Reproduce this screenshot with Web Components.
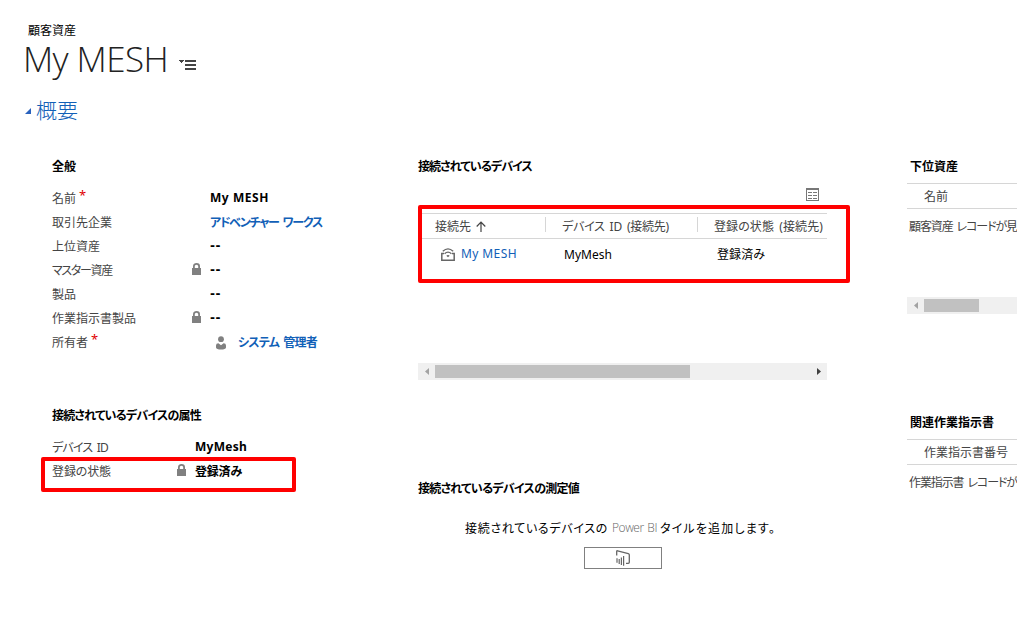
<!DOCTYPE html>
<html lang="ja">
<head>
<meta charset="utf-8">
<title>My MESH</title>
<style>
  html, body {
    margin: 0;
    height: 100%;
    overflow: hidden;
    background: #fff;
  }
  body {
    --link: #1160b7;
    --line: #d6d6d6;
    --mark: #f00;
    font: 12px/24px "Noto Sans", "Noto Sans CJK JP", sans-serif;
    color: #000;
  }
</style>
</head>
<body>
<asset-page></asset-page>

<script>
const define = (tag, html, setup) => {
  const template = document.createElement('template');
  template.innerHTML = html;
  customElements.define(tag, class extends HTMLElement {
    constructor() {
      super();
      this.attachShadow({mode: 'open'});
      this.shadowRoot.append(template.content.cloneNode(true));
    }

    connectedCallback() {
      if (setup) setup(this, this.shadowRoot);
    }
  });
};

// one line of text, tracked so that it fills the width in "w"
define('fit-text', `
<style>
  :host { display: block; white-space: nowrap; font-feature-settings: "palt"; flex: none; }
  span { display: inline-block; white-space: pre; }
  .kanji { padding-top: 1px; word-spacing: 2px; }
</style>
<span><slot></slot></span>
`, (host, root) => {
  const width = Number(host.getAttribute('w'));
  const span = root.querySelector('span');
  const count = host.textContent.length;
  if (!width || !count) return;
  // Japanese glyphs sit a pixel higher than Latin ones in this stack
  if (/[^\x00-\x7f]/.test(host.textContent)) span.className = 'kanji';
  span.style.letterSpacing = '0';
  const natural = span.getBoundingClientRect().width;
  span.style.letterSpacing = `${(width - natural) / count}px`;
  host.style.width = `${width}px`;
});

define('lock-icon', `
<style>
  :host { display: block; width: 9px; height: 12px; }
  svg { display: block; }
</style>
<svg width="9" height="12" viewBox="0 0 9 12">
  <path d="M1.900 6V3.300C1.900 1.700 3 .9 4.500 .9s2.600 .8 2.600 2.400V6" fill="none" stroke="#808080" stroke-width="1.800"/>
  <rect y="5" width="9" height="7" fill="#808080"/>
</svg>
`);

define('person-icon', `
<style>
  :host { display: block; width: 10px; height: 14px; }
  svg { display: block; }
</style>
<svg width="10" height="14" viewBox="0 0 10 14" fill="#808080">
  <circle cx="5" cy="3.2" r="2.9"/>
  <path d="M0 9.5Q0 7.3 2.4 7.2L5 9.2l2.6-2Q10 7.3 10 9.5v2Q9.5 13.5 5 13.5T0 11.5z"/>
</svg>
`);

define('device-icon', `
<style>
  :host { display: block; width: 14px; height: 13px; }
  svg { display: block; }
</style>
<svg width="14" height="13" viewBox="0 0 14 13" fill="none" stroke="#666">
  <path d="M3 5.500H.8v6.800h12.400V5.500H11" stroke-width="1.500"/>
  <path d="M1.800 3.300Q7-1.500 12.200 3.300M3.600 5.700Q7 2.500 10.400 5.700" stroke-width="1.300"/>
  <path d="M5.300 7.700Q7 6.300 8.700 7.700L7 9.300z" fill="#666" stroke="none"/>
</svg>
`);

define('grid-icon', `
<style>
  :host { display: block; width: 13px; height: 13px; }
  svg { display: block; }
</style>
<svg width="13" height="13" viewBox="0 0 13 13" fill="none" stroke="#777" shape-rendering="crispEdges">
  <path d="M.5 .5h12v12H.5zM0 1.500h13"/>
  <path d="M2 4.500h4M7 4.500h4M2 7.500h4M7 7.500h4M2 10.500h4M7 10.500h4"/>
</svg>
`);

define('scroll-bar', `
<style>
  :host { display: flex; height: 17px; background: #f0f0f0; align-items: center; }
  i { width: 17px; height: 17px; flex: none; display: grid; place-items: center; }
  b { height: 13px; flex: none; background: #c1c1c1; }
  u { flex: 1; }
  svg { display: block; }
</style>
<i><svg width="4" height="7"><path d="M4 0v7L0 3.500z" fill="#a3a3a3"/></svg></i>
<b></b><u></u>
<i><svg width="4" height="7"><path d="M0 0v7l4-3.500z" fill="#404040"/></svg></i>
`, (host, root) => {
  root.querySelector('b').style.width = host.getAttribute('thumb') + 'px';
});

define('form-row', `
<style>
  :host { display: flex; height: 24px; line-height: 24px; position: relative; }
  .label { display: flex; width: var(--lock-x, 140px); color: #444; flex: none; }
  .label em { display: none; font: 13px/19px "Noto Sans", sans-serif; color: #e00000; margin-left: 3px; }
  :host([required]) em { display: block; }
  .lock { width: 18px; flex: none; padding-top: 5px; }
  lock-icon { display: none; }
  :host([locked]) lock-icon { display: block; }
  .value { display: flex; font-weight: 700; }
  :host([empty]) .value { font-family: "DejaVu Sans", sans-serif; }
  :host([link]) .value { color: var(--link); }
  ::slotted(person-icon) { margin: 6px 12px 0 6px; }
  .mark { display: none; position: absolute; left: -11px; top: -2px; width: 247px; height: 27px; border: 4px solid var(--mark); border-radius: 2px; }
  :host([marked]) .mark { display: block; }
</style>
<div class="label"><slot name="label"></slot><em>*</em></div>
<div class="lock"><lock-icon></lock-icon></div>
<div class="value"><slot></slot></div>
<div class="mark"></div>
`);

define('form-section', `
<style>
  :host { display: block; }
  .title { height: 24px; font-weight: 700; padding-left: var(--title-inset, 0); }
</style>
<div class="title"><slot name="title"></slot></div>
<slot></slot>
`);

define('empty-list', `
<style>
  :host { display: block; color: #444; }
  .head { height: 24px; border: solid var(--line); border-width: 1px 0; padding-left: 17px; }
  .body { padding: 5px 0 0 2px; }
</style>
<div class="head"><slot name="column"></slot></div>
<div class="body"><slot></slot></div>
`);

define('device-list', `
<style>
  :host { display: block; position: relative; height: 150px; }
  .grid { display: grid; grid-template-columns: 127px 152px 130px; }
  .head { height: 24px; border: solid var(--line); border-width: 1px 0; color: #444; }
  .head div { display: flex; padding-left: 17px; align-items: center; }
  .head div + div { background: linear-gradient(var(--line), var(--line)) 0 3px / 1px 15px no-repeat; padding-left: 17px; }
  .row { height: 30px; line-height: 30px; padding-top: 1px; }
  .row > div { display: flex; padding-left: 19px; }
  .row > div:first-child { padding-left: 23px; color: var(--link); }
  .row > div:last-child { padding-left: 20px; margin-top: -1px; }
  .row > div:first-child fit-text { margin-top: -1px; }
  device-icon { margin: 8px 6px 0 0; }
  .mark { position: absolute; left: 0; top: -8px; width: 424px; height: 70px; border: 4px solid var(--mark); border-radius: 2px; }
  .sort { margin-left: 5px; }
</style>
<div class="grid head">
  <div><fit-text w="36">接続先</fit-text><svg class="sort" width="10" height="11" fill="none" stroke="#444" stroke-width="1.200"><path d="M5 11V1M.7 5.500L5 1l4.300 4.500"/></svg></div>
  <div><fit-text w="107">デバイス ID (接続先)</fit-text></div>
  <div><fit-text w="109">登録の状態 (接続先)</fit-text></div>
</div>
<div class="grid row">
  <div><device-icon></device-icon><fit-text w="56">My MESH</fit-text></div>
  <div><fit-text w="48">MyMesh</fit-text></div>
  <div><fit-text w="48">登録済み</fit-text></div>
</div>
<div class="mark"></div>
`);

define('power-bi-tile', `
<style>
  :host { display: flex; flex-direction: column; align-items: center; padding-top: 16px; }
  .text { display: flex; height: 24px; margin-left: -4px; }
  .brand { color: #666; font-family: "Open Sans", sans-serif; font-weight: 300; margin: 0 3px 0 4px; word-spacing: 1px; }
  button { width: 78px; height: 22px; margin: 7px 0 0; padding: 0; background: #fff; border: 1px solid #808080; display: grid; place-items: center; }
  svg { display: block; }
</style>
<div class="text">
  <fit-text w="143">接続されているデバイスの</fit-text>
  <fit-text class="brand" w="45">Power BI</fit-text>
  <fit-text w="116">タイルを追加します。</fit-text>
</div>
<button type="button" aria-label="Power BI">
  <svg width="14" height="16" viewBox="0 0 14 16" fill="none" stroke="#666">
    <path d="M.7 5.500V1.500Q.7 .6 1.600 .8L12.300 3.600Q13.300 3.900 13.300 4.800v7.400Q13.300 13.300 12.200 13.300H10" stroke-width="1.300"/>
    <path d="M1 8.300v4.500M3.200 9v5M5.400 7.500V15M7.600 6v9.700" stroke-width="1.200"/>
  </svg>
</button>
`);

define('page-header', `
<style>
  :host { display: block; height: 154px; box-sizing: border-box; padding: 18px 0 0 23px; }
  .entity { padding-left: 5px; height: 24px; }
  .name { display: flex; height: 37px; font: 300 35px/33px "Open Sans", sans-serif; color: #222; }
  .name svg { margin: 17px 0 0 11px; }
  .tab { display: flex; font: 300 21px/32px "Noto Sans CJK JP", sans-serif; color: var(--link); margin-top: 13px; }
  .tab svg { margin: 16px 5px 0 2px; }
</style>
<div class="entity"><fit-text w="48">顧客資産</fit-text></div>
<div class="name">
  <fit-text w="145">My MESH</fit-text>
  <svg width="17" height="11" fill="#444" shape-rendering="crispEdges"><path d="M0 1h5L2.500 4zM6 1h11v2H6zM6 5h11v2H6zM6 9h11v2H6z"/></svg>
</div>
<div class="tab"><svg width="6" height="6"><path d="M6 0v6H0z" fill="#2a62bd"/></svg><fit-text w="42">概要</fit-text></div>
`);

define('asset-page', `
<style>
  :host { display: block; width: 1018px; height: 632px; overflow: hidden; }
  .columns { display: grid; grid-template-columns: 366px 489px 110px; padding-left: 52px; }
  .general { height: 249px; }
  .fields { padding-top: 8px; }
  .attributes { --lock-x: 125px; }
  .devices { height: 322px; }
  .devices grid-icon { margin: 10px 0 12px 388px; }
  .middle { width: 409px; }
  .right { overflow: hidden; --title-inset: 3px; }
  .right scroll-bar { width: 300px; }
  .children { height: 256px; }
  .children empty-list { margin-top: 5px; height: 114px; }
  .orders empty-list { margin-top: 5px; }
</style>
<page-header></page-header>
<div class="columns">
  <div>
    <form-section class="general">
      <fit-text slot="title" w="24">全般</fit-text>
      <div class="fields">
        <form-row required><fit-text slot="label" w="24">名前</fit-text><fit-text w="59">My MESH</fit-text></form-row>
        <form-row link><fit-text slot="label" w="60">取引先企業</fit-text><fit-text w="112">アドベンチャー ワークス</fit-text></form-row>
        <form-row empty><fit-text slot="label" w="48">上位資産</fit-text><fit-text w="11">--</fit-text></form-row>
        <form-row locked empty><fit-text slot="label" w="60">マスター資産</fit-text><fit-text w="11">--</fit-text></form-row>
        <form-row empty><fit-text slot="label" w="24">製品</fit-text><fit-text w="11">--</fit-text></form-row>
        <form-row locked empty><fit-text slot="label" w="84">作業指示書製品</fit-text><fit-text w="11">--</fit-text></form-row>
        <form-row required link><fit-text slot="label" w="36">所有者</fit-text><person-icon></person-icon><fit-text w="79">システム 管理者</fit-text></form-row>
      </div>
    </form-section>
    <form-section class="attributes">
      <fit-text slot="title" w="149">接続されているデバイスの属性</fit-text>
      <div class="fields">
        <form-row><fit-text slot="label" w="56">デバイス ID</fit-text><fit-text w="52">MyMesh</fit-text></form-row>
        <form-row locked marked><fit-text slot="label" w="59">登録の状態</fit-text><fit-text w="47">登録済み</fit-text></form-row>
      </div>
    </form-section>
  </div>
  <div class="middle">
    <form-section class="devices">
      <fit-text slot="title" w="114">接続されているデバイス</fit-text>
      <grid-icon></grid-icon>
      <device-list></device-list>
      <scroll-bar thumb="255"></scroll-bar>
    </form-section>
    <form-section>
      <fit-text slot="title" w="161">接続されているデバイスの測定値</fit-text>
      <power-bi-tile></power-bi-tile>
    </form-section>
  </div>
  <div class="right">
    <form-section class="children">
      <fit-text slot="title" w="48">下位資産</fit-text>
      <empty-list><fit-text slot="column" w="24">名前</fit-text><fit-text w="108">顧客資産 レコードが見</fit-text></empty-list>
      <scroll-bar thumb="55"></scroll-bar>
    </form-section>
    <form-section class="orders">
      <fit-text slot="title" w="84">関連作業指示書</fit-text>
      <empty-list><fit-text slot="column" w="84">作業指示書番号</fit-text><fit-text w="108">作業指示書 レコードが</fit-text></empty-list>
    </form-section>
  </div>
</div>
`);
</script>
</body>
</html>
